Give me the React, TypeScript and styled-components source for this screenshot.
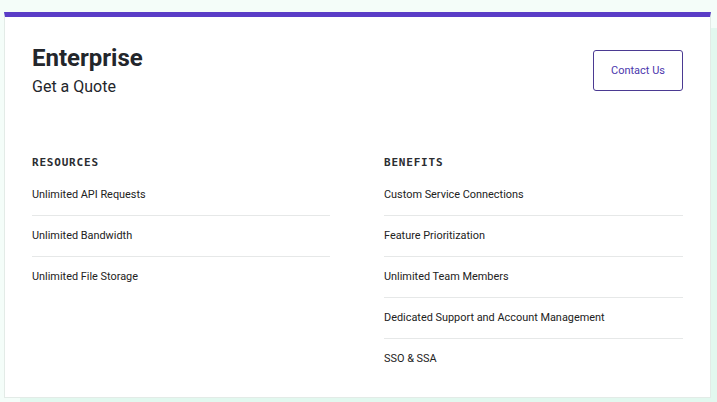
import React from "react";
import styled, { createGlobalStyle } from "styled-components";

const Global = createGlobalStyle`
  html, body { margin: 0; padding: 0; }
  body {
    background: #f4fdf9;
    font-family: Roboto, "Liberation Sans", Arial, sans-serif;
    color: #222;
  }
`;

const Page = styled.div`
  padding: 12px 0 0 4px;
  width: 717px;
  height: 402px;
  box-sizing: border-box;
  overflow: hidden;
`;

const Card = styled.section`
  width: 707px;
  box-sizing: border-box;
  background: #fff;
  border: 1px solid #e3ebe7;
  border-top: 5px solid #5a3dc7;
  box-shadow: 16px 16px 0 #e2f8ef;
  padding: 27px 27px 18px 27px;
`;

const Header = styled.header`
  display: flex;
  justify-content: space-between;
  align-items: flex-start;
`;

const TitleBlock = styled.div`
  display: flex;
  flex-direction: column;
  gap: 5px;
`;

const Title = styled.h1`
  margin: 0;
  font-size: 24px;
  line-height: 28px;
  font-weight: 700;
  color: #23262b;
`;

const Subtitle = styled.p`
  margin: 0;
  font-size: 16px;
  line-height: 20px;
  color: #23262b;
`;

const ContactButton = styled.button`
  margin-top: 6px;
  width: 90px;
  height: 41px;
  box-sizing: border-box;
  border: 1px solid #4b3a92;
  border-radius: 3px;
  background: #fff;
  color: #4c37ad;
  font-family: Roboto, "Liberation Sans", Arial, sans-serif;
  font-size: 11px;
  padding: 0;
  cursor: pointer;
`;

const Columns = styled.div`
  display: grid;
  grid-template-columns: 298px 299px;
  column-gap: 54px;
  margin-top: 59px;
`;

const Column = styled.div`
  display: flex;
  flex-direction: column;
`;

const SectionTitle = styled.h2`
  margin: 0 0 5px 0;
  font-family: "DejaVu Sans Mono", "Liberation Mono", monospace;
  font-size: 11px;
  line-height: 14px;
  font-weight: 700;
  letter-spacing: 0.8px;
  color: #2b2d31;
`;

const List = styled.ul`
  list-style: none;
  margin: 0;
  padding: 0;
`;

const Item = styled.li`
  font-size: 10.9px;
  line-height: 17px;
  padding: 11px 0 12px;
  border-bottom: 1px solid #e6e8e8;
  color: #222;
  &:last-child { border-bottom: none; }
`;

const resources = ["Unlimited API Requests", "Unlimited Bandwidth", "Unlimited File Storage"];
const benefits = [
  "Custom Service Connections",
  "Feature Prioritization",
  "Unlimited Team Members",
  "Dedicated Support and Account Management",
  "SSO & SSA",
];

export default function App() {
  return (
    <Page>
      <Global />
      <Card>
        <Header>
          <TitleBlock>
            <Title>Enterprise</Title>
            <Subtitle>Get a Quote</Subtitle>
          </TitleBlock>
          <ContactButton>Contact Us</ContactButton>
        </Header>
        <Columns>
          <Column>
            <SectionTitle>RESOURCES</SectionTitle>
            <List>
              {resources.map((r) => (
                <Item key={r}>{r}</Item>
              ))}
            </List>
          </Column>
          <Column>
            <SectionTitle>BENEFITS</SectionTitle>
            <List>
              {benefits.map((b) => (
                <Item key={b}>{b}</Item>
              ))}
            </List>
          </Column>
        </Columns>
      </Card>
    </Page>
  );
}
